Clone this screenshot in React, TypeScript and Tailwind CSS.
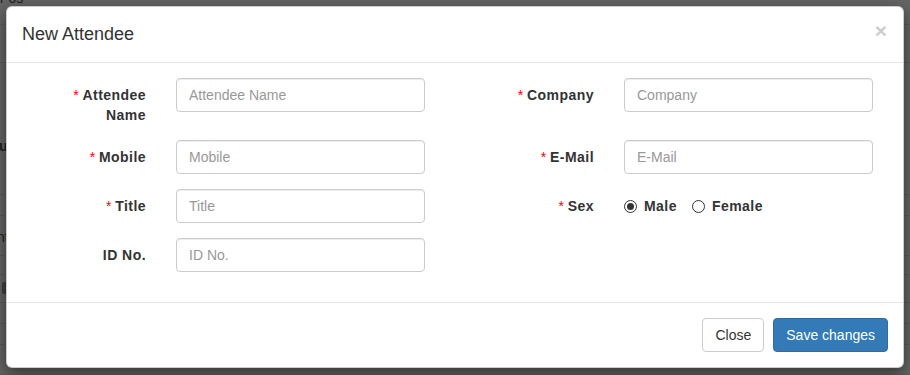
import React from 'react';

const font = "font-['Liberation_Sans',Arial,Helvetica,sans-serif]";

function Field({ label, required, placeholder }: { label: string; required?: boolean; placeholder: string }) {
  return (
    <div className="flex items-start">
      <label className="w-[139px] shrink-0 px-[15px] pt-[7px] text-right text-[14px] leading-[20px] font-bold tracking-[0.45px] text-[#333]">
        {required && <span className="font-normal tracking-normal text-[#f00]">* </span>}
        {label}
      </label>
      <div className="flex-1 px-[15px]">
        <input
          placeholder={placeholder}
          className="block h-[34px] w-full rounded-[4px] border border-[#ccc] bg-white px-[12px] text-[14px] text-[#555] shadow-[inset_0_1px_1px_rgba(0,0,0,0.075)] outline-none placeholder:text-[#999]"
        />
      </div>
    </div>
  );
}

function Radio({ checked, label }: { checked?: boolean; label: string }) {
  return (
    <span className="flex items-center gap-[7px]">
      <span className="flex h-[13px] w-[13px] items-center justify-center rounded-full border border-[#333] bg-white">
        {checked && <span className="h-[7px] w-[7px] rounded-full bg-[#333]" />}
      </span>
      <span className="font-bold tracking-[0.45px]">{label}</span>
    </span>
  );
}

// page behind the backdrop, only the edges show
const pageRows = [
  { h: 'h-[25px]', text: '' },
  { h: 'h-[38px]', text: '' },
  { h: 'h-[132px]', text: 'tu' },
  { h: 'h-[21px]', text: '' },
  { h: 'h-[40px]', text: 'nt' },
  { h: 'h-[19px]', text: '' },
  { h: 'h-[28px]', text: 'badge' },
  { h: 'h-[21px]', text: '' },
  { h: 'h-[21px]', text: '' },
  { h: 'h-[30px]', text: '' },
];

export default function App() {
  return (
    <div className={`relative h-[375px] w-[910px] overflow-hidden bg-[#656565] ${font}`}>
      {/* background page */}
      <div className="flex flex-col">
        {pageRows.map((r, i) => (
          <div key={i} className={`${r.h} border-b border-[#5b5b5b] text-[14px] text-[#1e1e1e]`}>
            {i === 0 && <div className="-mt-[9px] leading-[14px]">r os</div>}
            {r.text === 'tu' && (
              <div className="-ml-[5px] flex flex-col font-bold leading-[20px]">
                <span className="mt-[23px]">t</span>
                <span className="mt-[30px] ml-[4px]">u</span>
              </div>
            )}
            {r.text === 'nt' && <div className="-ml-[3px] pt-[11px] leading-[20px]">nt</div>}
            {r.text === 'badge' && <div className="mt-[7px] ml-[2px] h-[12px] w-[10px] rounded-[2px] bg-[#3f3f3f]" />}
          </div>
        ))}
      </div>

      {/* modal */}
      <div className="absolute left-[6px] top-[6px] w-[898px] rounded-[6px] border border-[rgba(0,0,0,0.2)] bg-white text-[14px] text-[#333] shadow-[0_5px_15px_rgba(0,0,0,0.5)]">
        <div className="flex items-start justify-between border-b border-[#e5e5e5] p-[15px]">
          <h4 className="text-[18px] leading-[25px] text-[#333]">New Attendee</h4>
          <button className="-mt-[2px] mr-[1px] text-[21px] leading-none font-bold text-black opacity-20">×</button>
        </div>

        <div className="grid grid-cols-2 gap-x-[30px] gap-y-[15px] px-[15px] pt-[15px] pb-[30px]">
          <Field label="Attendee Name" required placeholder="Attendee Name" />
          <Field label="Company" required placeholder="Company" />
          <Field label="Mobile" required placeholder="Mobile" />
          <Field label="E-Mail" required placeholder="E-Mail" />
          <Field label="Title" required placeholder="Title" />
          <div className="flex items-start">
            <label className="w-[139px] shrink-0 px-[15px] pt-[7px] text-right leading-[20px] font-bold tracking-[0.45px]">
              <span className="font-normal tracking-normal text-[#f00]">* </span>
              Sex
            </label>
            <div className="flex items-center gap-[15px] px-[15px] pt-[7px] leading-[20px]">
              <Radio checked label="Male" />
              <Radio label="Female" />
            </div>
          </div>
          <Field label="ID No." placeholder="ID No." />
          <div />
        </div>

        <div className="flex justify-end gap-[9px] border-t border-[#e5e5e5] p-[15px]">
          <button className="h-[34px] rounded-[4px] border border-[#ccc] bg-white px-[12px] text-[14px] text-[#333]">Close</button>
          <button className="h-[34px] rounded-[4px] border border-[#2e6da4] bg-[#337ab7] px-[12px] text-[14px] text-white">Save changes</button>
        </div>
      </div>
    </div>
  );
}
